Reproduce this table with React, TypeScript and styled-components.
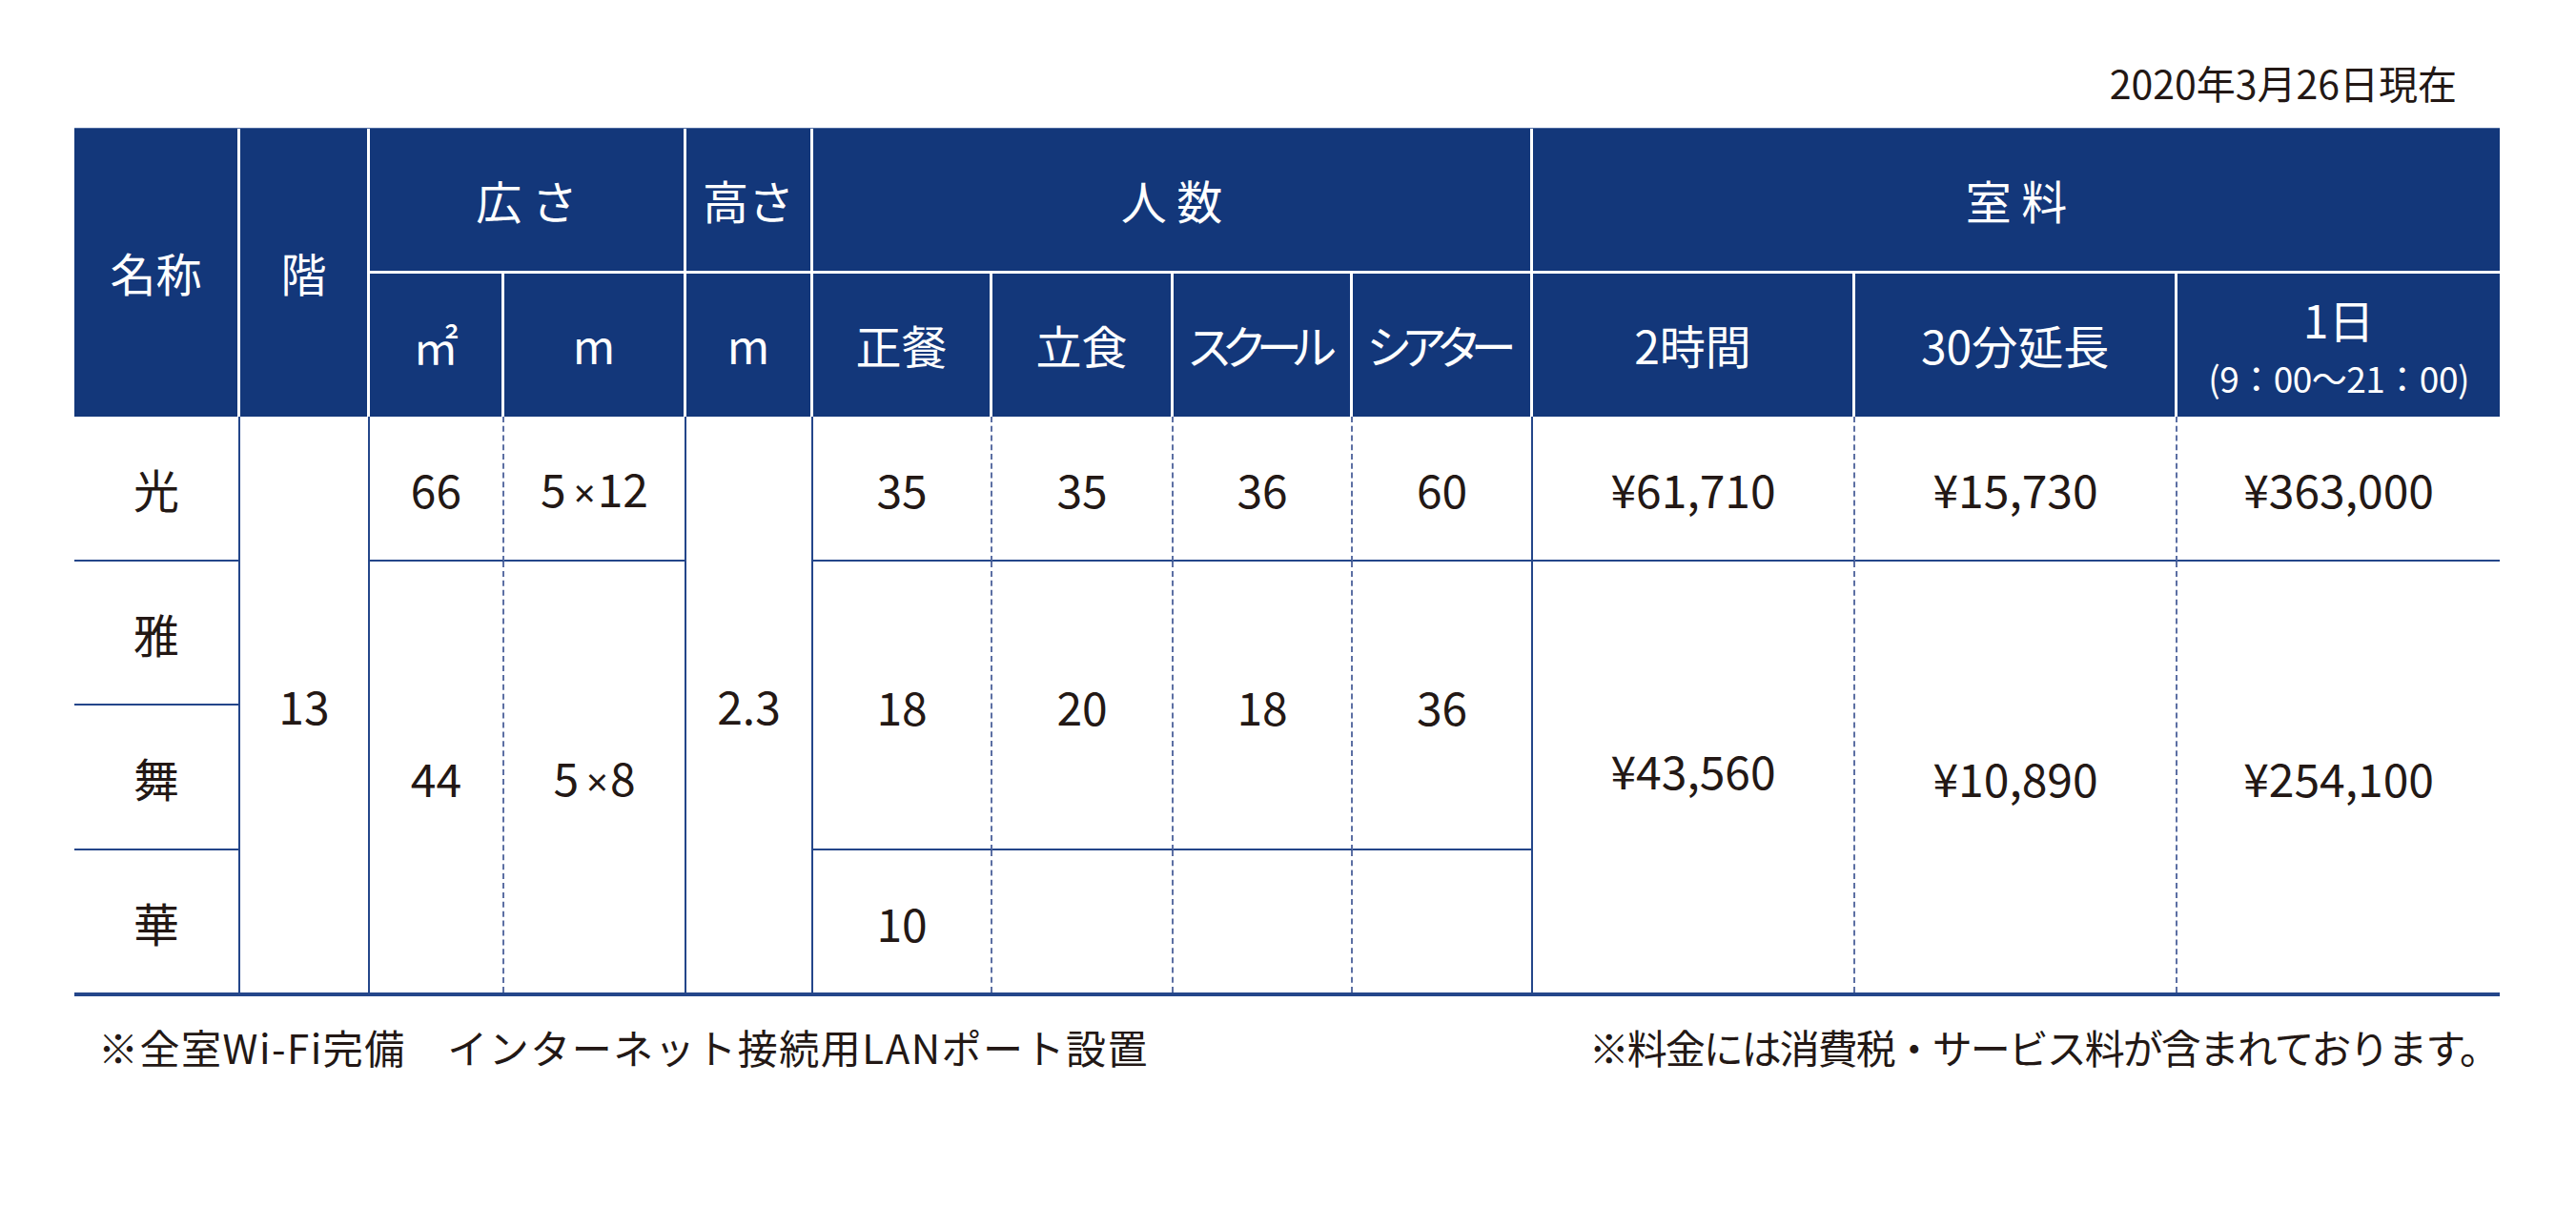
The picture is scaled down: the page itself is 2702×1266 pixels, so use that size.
import React from "react";
import styled, { createGlobalStyle } from "styled-components";

const NAVY = "#13377a";
const LINE = "#24468a";
const DASH = "#5c6fa3";
const INK = "#231815";

type Edge = "solid" | "dashed" | "none";

const GlobalStyle = createGlobalStyle`
	html, body {
		margin: 0;
		padding: 0;
		background: #ffffff;
	}
	body {
		font-family: "Noto Sans CJK JP", "Noto Sans", sans-serif;
		color: ${INK};
	}
`;

const COLS = [174, 136, 141, 191, 133, 188, 190, 188, 189, 338, 338, 338];

const App = () => {
	return (
		<Page>
			<GlobalStyle />
			<DateLine>2020年3月26日現在</DateLine>
			<Table>
				<colgroup>
					{COLS.map((w, i) => (
						<col key={i} style={{ width: w }} />
					))}
				</colgroup>
				<thead>
					<Row $h={152}>
						<Th rowSpan={2} $right>名称</Th>
						<Th rowSpan={2} $right>階</Th>
						<Th colSpan={2} $right $bottom $spaced>広さ</Th>
						<Th $right $bottom>高さ</Th>
						<Th colSpan={4} $right $bottom $spaced>人数</Th>
						<Th colSpan={3} $bottom $spaced>室料</Th>
					</Row>
					<Row $h={150}>
						<Th $right>㎡</Th>
						<Th $right>m</Th>
						<Th $right>m</Th>
						<Th $right>正餐</Th>
						<Th $right>立食</Th>
						<Th $right $tight>スクール</Th>
						<Th $right $tight>シアター</Th>
						<Th $right>2時間</Th>
						<Th $right>30分延長</Th>
						<Th>
							<DayLabel>1日</DayLabel>
							<Hours>(9：00〜21：00)</Hours>
						</Th>
					</Row>
				</thead>
				<tbody>
					<Row $h={152}>
						<Td $right="solid" $bottom>光</Td>
						<Td rowSpan={4} $right="solid">13</Td>
						<Td $right="dashed" $bottom>66</Td>
						<Td $right="solid" $bottom>
							5<Times>×</Times>12
						</Td>
						<Td rowSpan={4} $right="solid">2.3</Td>
						<Td $right="dashed" $bottom>35</Td>
						<Td $right="dashed" $bottom>35</Td>
						<Td $right="dashed" $bottom>36</Td>
						<Td $right="solid" $bottom>60</Td>
						<Td $right="dashed" $bottom>¥61,710</Td>
						<Td $right="dashed" $bottom>¥15,730</Td>
						<Td $bottom>¥363,000</Td>
					</Row>
					<Row $h={151}>
						<Td $right="solid" $bottom>雅</Td>
						<Td rowSpan={3} $right="dashed">44</Td>
						<Td rowSpan={3} $right="solid">
							5<Times>×</Times>8
						</Td>
						<Td rowSpan={2} $right="dashed" $bottom>18</Td>
						<Td rowSpan={2} $right="dashed" $bottom>20</Td>
						<Td rowSpan={2} $right="dashed" $bottom>18</Td>
						<Td rowSpan={2} $right="solid" $bottom>36</Td>
						<Td rowSpan={3} $right="dashed" $lift>¥43,560</Td>
						<Td rowSpan={3} $right="dashed">¥10,890</Td>
						<Td rowSpan={3}>¥254,100</Td>
					</Row>
					<Row $h={152}>
						<Td $right="solid" $bottom>舞</Td>
					</Row>
					<Row $h={149}>
						<Td $right="solid">華</Td>
						<Td $right="dashed">10</Td>
						<Td $right="dashed" />
						<Td $right="dashed" />
						<Td $right="solid" />
					</Row>
				</tbody>
			</Table>
			<Footer>
				<Note $spacing={1.5}>※全室Wi-Fi完備　インターネット接続用LANポート設置</Note>
				<Note $spacing={-2}>※料金には消費税・サービス料が含まれております。</Note>
			</Footer>
		</Page>
	);
};

const Page = styled.div`
	width: 2702px;
	height: 1266px;
	box-sizing: border-box;
	padding: 0 80px 0 78px;
	overflow: hidden;
`;

const DateLine = styled.div`
	height: 134px;
	box-sizing: border-box;
	display: flex;
	justify-content: flex-end;
	align-items: flex-end;
	padding: 0 45px 24px 0;
	font-size: 41px;
	line-height: 48px;
	white-space: nowrap;
`;

const Table = styled.table`
	width: 2544px;
	table-layout: fixed;
	border-collapse: separate;
	border-spacing: 0;
	border-top: 1px solid #4d6aa0;
	border-bottom: 4px solid ${LINE};
`;

const Row = styled.tr<{ $h: number }>`
	height: ${(p) => p.$h}px;
`;

const Th = styled.th<{ $right?: boolean; $bottom?: boolean; $spaced?: boolean; $tight?: boolean }>`
	background: ${NAVY};
	color: #ffffff;
	font-weight: 400;
	font-size: 48px;
	line-height: 1.2;
	padding: 0;
	text-align: center;
	vertical-align: middle;
	white-space: nowrap;
	border-right: ${(p) => (p.$right ? "3px solid #ffffff" : "none")};
	border-bottom: ${(p) => (p.$bottom ? "3px solid #ffffff" : "none")};
	letter-spacing: ${(p) => (p.$spaced ? "0.22em" : p.$tight ? "-0.24em" : "0")};
	padding-left: ${(p) => (p.$spaced ? "0.22em" : "0")};
	padding-right: ${(p) => (p.$tight ? "0.24em" : "0")};
`;

const DayLabel = styled.span`
	display: block;
	line-height: 1.45;
`;

const Hours = styled.span`
	display: block;
	font-size: 37px;
	line-height: 1.45;
	letter-spacing: -0.5px;
`;

const Td = styled.td<{ $right?: Edge; $bottom?: boolean; $lift?: boolean }>`
	font-size: 48px;
	line-height: 1;
	padding: ${(p) => (p.$lift ? "0 0 16px" : "0")};
	text-align: center;
	vertical-align: middle;
	white-space: nowrap;
	border-right: ${(p) =>
		p.$right === "solid"
			? `2px solid ${LINE}`
			: p.$right === "dashed"
			? `2px dashed ${DASH}`
			: "none"};
	border-bottom: ${(p) => (p.$bottom ? `2px solid ${LINE}` : "none")};
`;

const Times = styled.span`
	font-family: "Noto Sans", sans-serif;
	font-size: 40px;
	margin: 0 2px 0 8px;
`;

const Footer = styled.div`
	display: flex;
	justify-content: space-between;
	align-items: center;
	margin-top: 29px;
	padding: 0 2px 0 25px;
	font-size: 42px;
	line-height: 48px;
	white-space: nowrap;
`;

const Note = styled.span<{ $spacing: number }>`
	letter-spacing: ${(p) => p.$spacing}px;
`;

export default App;
